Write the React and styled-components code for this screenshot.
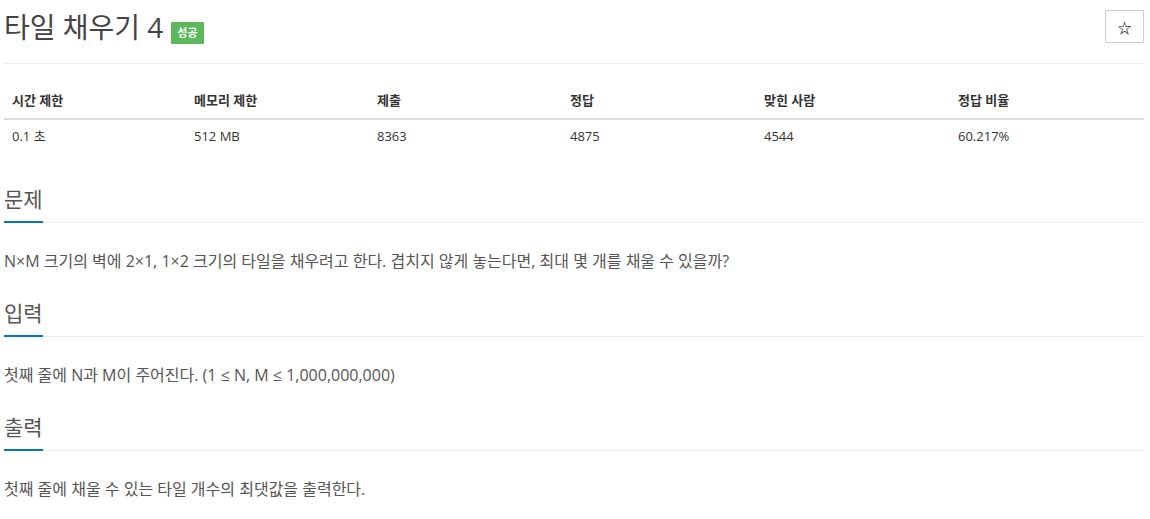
import styled, { createGlobalStyle } from "styled-components";

const GlobalStyle = createGlobalStyle`
  body {
    margin: 0;
    background: #fff;
    font-family: "Open Sans", "Noto Sans CJK KR", sans-serif;
    font-size: 14px;
    line-height: 1.42857;
    color: #333;
  }
  * { box-sizing: border-box; }
`;

const Page = styled.div`
  padding: 0 6px 0 4px;
`;

const Header = styled.div`
  display: flex;
  align-items: flex-start;
  justify-content: space-between;
  padding: 9px 0 18px;
  border-bottom: 1px solid #eee;
`;

const Title = styled.h1`
  margin: 0;
  font-size: 28px;
  font-weight: 400;
  line-height: 36px;
  color: #444;
  display: flex;
  align-items: center;
  gap: 8px;
`;

const Label = styled.span`
  align-self: flex-end;
  margin-bottom: 1px;
  display: inline-block;
  background: #5cb85c;
  color: #fff;
  font-size: 11px;
  font-weight: 700;
  line-height: 22px;
  height: 22px;
  padding: 0 6px;
  border-radius: 1px;
`;

const StarButton = styled.button`
  width: 39px;
  height: 33px;
  margin-top: 1px;
  background: #fff;
  border: 1px solid #ccc;
  border-radius: 1px;
  font-size: 14px;
  font-weight: 700;
  color: #222;
  padding: 0;
  font-family: "Noto Sans CJK KR", "DejaVu Sans", sans-serif;
  display: flex;
  align-items: center;
  justify-content: center;
`;

const Table = styled.table`
  width: 100%;
  border-collapse: collapse;
  margin-top: 19px;
  table-layout: fixed;
`;

const Th = styled.th`
  width: ${(p) => p.$w || "auto"};
  text-align: left;
  font-weight: 700;
  font-size: 13px;
  padding: 8px;
  border-bottom: 2px solid #ddd;
  color: #333;
`;

const Td = styled.td`
  font-size: 13px;
  padding: 7px 8px 6px;
  color: #333;
`;

const Section = styled.section`
  margin-top: ${(p) => p.$top || "25px"};
`;

const Headline = styled.div`
  border-bottom: 1px dotted #ddd;
`;

const Heading = styled.h2`
  display: inline-block;
  margin: 0 0 -1px;
  font-size: 21px;
  font-weight: 400;
  line-height: 30px;
  color: #555;
  padding-bottom: 7px;
  border-bottom: 2px solid #0076c0;
`;

const Text = styled.p`
  margin: 27px 0 0;
  font-size: 16px;
  color: #555;
`;

const stats = [
  { head: "시간 제한", value: "0.1 초", w: "182px" },
  { head: "메모리 제한", value: "512 MB", w: "183px" },
  { head: "제출", value: "8363", w: "193px" },
  { head: "정답", value: "4875", w: "194px" },
  { head: "맞힌 사람", value: "4544", w: "194px" },
  { head: "정답 비율", value: "60.217%" },
];

const sections = [
  {
    title: "문제",
    text: "N×M 크기의 벽에 2×1, 1×2 크기의 타일을 채우려고 한다. 겹치지 않게 놓는다면, 최대 몇 개를 채울 수 있을까?",
  },
  {
    title: "입력",
    text: "첫째 줄에 N과 M이 주어진다. (1 ≤ N, M ≤ 1,000,000,000)",
  },
  {
    title: "출력",
    text: "첫째 줄에 채울 수 있는 타일 개수의 최댓값을 출력한다.",
  },
];

export default function App() {
  return (
    <Page>
      <GlobalStyle />
      <Header>
        <Title>
          타일 채우기 4 <Label>성공</Label>
        </Title>
        <StarButton>☆</StarButton>
      </Header>
      <Table>
        <thead>
          <tr>
            {stats.map((s) => (
              <Th key={s.head} $w={s.w}>
                {s.head}
              </Th>
            ))}
          </tr>
        </thead>
        <tbody>
          <tr>
            {stats.map((s) => (
              <Td key={s.head}>{s.value}</Td>
            ))}
          </tr>
        </tbody>
      </Table>
      {sections.map((s, i) => (
        <Section key={s.title} $top={i === 0 ? "33px" : "25px"}>
          <Headline>
            <Heading>{s.title}</Heading>
          </Headline>
          <Text>{s.text}</Text>
        </Section>
      ))}
    </Page>
  );
}
